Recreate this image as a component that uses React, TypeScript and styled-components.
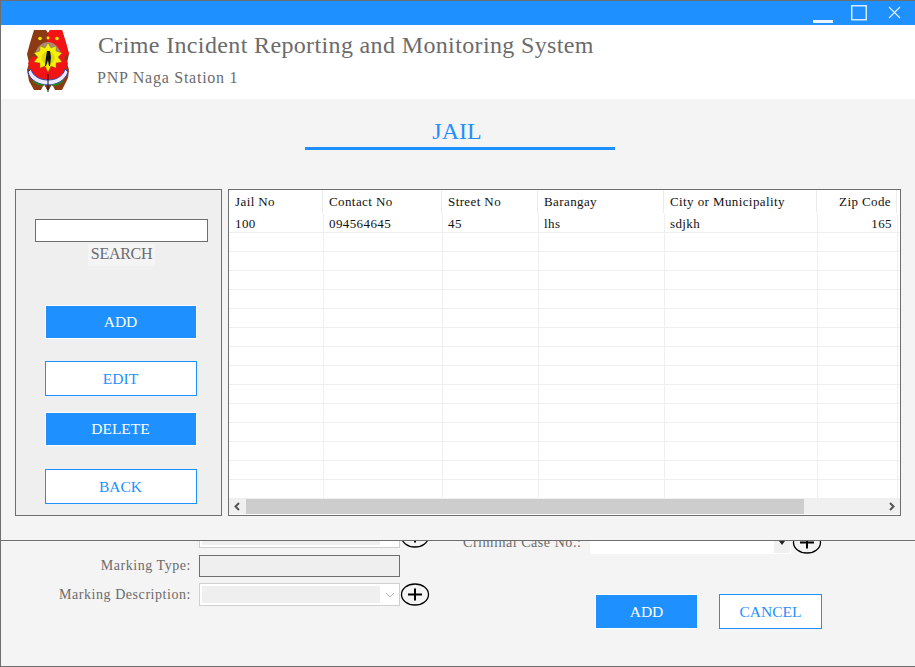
import React from "react";
import styled, { createGlobalStyle } from "styled-components";

const SERIF = `"Liberation Serif", "Times New Roman", serif`;
const BLUE = "#1e90ff";
const GREY_TEXT = "#6b6b6b";
const EDGE = "#6e6e6e";

const GlobalStyle = createGlobalStyle`
    html, body {
        margin: 0;
        padding: 0;
        background: #f4f4f4;
    }
    * {
        box-sizing: border-box;
    }
`;

const Window = styled.div`
    width: 915px;
    height: 667px;
    display: flex;
    flex-direction: column;
    border: 1px solid ${EDGE};
    border-right: 0;
    background: #f4f4f4;
    font-family: ${SERIF};
    overflow: hidden;
`;

const TitleBar = styled.div`
    height: 24px;
    flex: none;
    display: flex;
    justify-content: flex-end;
    align-items: flex-start;
    background: ${BLUE};
    padding: 4px 14px 0 0;
`;

const WindowIcon = styled.svg`
    display: block;
    margin-left: ${(p: { $gap: number }) => p.$gap}px;
`;

const Header = styled.div`
    height: 74px;
    flex: none;
    display: flex;
    background: #fff;
    padding: 5px 0 0 26px;
    gap: 29px;
`;

const HeaderText = styled.div`
    display: flex;
    flex-direction: column;
    color: ${GREY_TEXT};
`;

const AppTitle = styled.div`
    font-size: 24px;
    line-height: 30px;
    letter-spacing: 0.36px;
`;

const AppSubtitle = styled.div`
    font-size: 16px;
    line-height: 20px;
    margin-top: 8px;
    margin-left: -1px;
    letter-spacing: 0.75px;
`;

const MainPanel = styled.div`
    height: 442px;
    flex: none;
    display: flex;
    flex-direction: column;
    align-items: center;
    background: #f4f4f4;
    border-bottom: 1px solid ${EDGE};
    padding-top: 15px;
`;

const PageTitle = styled.div`
    width: 310px;
    height: 36px;
    flex: none;
    border-bottom: 3px solid ${BLUE};
    color: ${BLUE};
    font-size: 24px;
    line-height: 34px;
    text-align: center;
    margin-left: 3px;
    padding-right: 5px;
`;

const Body = styled.div`
    width: 100%;
    display: flex;
    gap: 6px;
    padding: 39px 14px 0 14px;
`;

const SidePanel = styled.div`
    width: 207px;
    height: 327px;
    flex: none;
    display: flex;
    flex-direction: column;
    align-items: center;
    background: #efefef;
    border: 1px solid ${EDGE};
    padding: 29px 0 0 6px;
`;

const SearchInput = styled.input`
    width: 173px;
    height: 23px;
    flex: none;
    background: #fff;
    border: 1px solid ${EDGE};
    border-radius: 0;
    padding: 0;
`;

const SearchLabel = styled.div`
    width: 67px;
    height: 22px;
    flex: none;
    margin-top: 2px;
    background: #f4f4f4;
    color: ${GREY_TEXT};
    font-size: 16px;
    letter-spacing: -0.3px;
    line-height: 20px;
    text-align: center;
`;

const SideButtons = styled.div`
    display: flex;
    flex-direction: column;
    align-items: center;
    margin: 39px 2px 0 0;
`;

const ActionButton = styled.button<{ $solid?: boolean; $w: number; $h: number; $top?: number }>`
    width: ${(p) => p.$w}px;
    height: ${(p) => p.$h}px;
    flex: none;
    margin-top: ${(p) => p.$top ?? 0}px;
    padding: 0;
    border-radius: 0;
    border: 1px solid ${(p) => (p.$solid ? "#fff" : BLUE)};
    background: ${(p) => (p.$solid ? BLUE : "#fff")};
    color: ${(p) => (p.$solid ? "#fff" : BLUE)};
    font-family: ${SERIF};
    font-size: 15.5px;
`;

const TableBox = styled.div`
    width: 673px;
    height: 327px;
    flex: none;
    display: flex;
    flex-direction: column;
    background: #fff;
    border: 1px solid ${EDGE};
`;

const Rows = styled.div`
    flex: 1;
    overflow: hidden;
`;

const HeadRow = styled.div`
    height: 24px;
    display: flex;
`;

const HeadCell = styled.div<{ $w: number; $right?: boolean }>`
    width: ${(p) => p.$w}px;
    height: 23px;
    flex: none;
    border-right: 1px solid #ececec;
    padding: 0 5px 0 6px;
    color: #111;
    font-size: 13px;
    letter-spacing: 0.4px;
    line-height: 23px;
    text-align: ${(p) => (p.$right ? "right" : "left")};
    white-space: nowrap;
`;

const DataRow = styled.div`
    height: 19px;
    display: flex;
    padding-left: 1px;
    border-bottom: 1px solid #efefef;
`;

const DataCell = styled.div<{ $w: number; $right?: boolean }>`
    width: ${(p) => p.$w}px;
    height: 18px;
    flex: none;
    box-sizing: content-box;
    margin-right: 0;
    border-right: 1px solid #efefef;
    padding: 0 5px;
    color: #111;
    font-size: 13px;
    letter-spacing: 0.4px;
    line-height: 20px;
    text-align: ${(p) => (p.$right ? "right" : "left")};
    white-space: nowrap;
    width: ${(p) => p.$w - 11}px;
`;

const ScrollBar = styled.div`
    height: 15px;
    flex: none;
    display: flex;
    align-items: center;
    background: #f0f0f0;
    margin-bottom: 1px;
`;

const ScrollArrow = styled.svg`
    width: 17px;
    height: 15px;
    flex: none;
`;

const ScrollTrack = styled.div`
    flex: 1;
    height: 15px;
`;

const ScrollThumb = styled.div`
    width: 558px;
    height: 15px;
    background: #cdcdcd;
`;

const Lower = styled.div`
    flex: 1;
    min-height: 0;
    display: flex;
    overflow: hidden;
`;

const LowerLeft = styled.div`
    width: 462px;
    flex: none;
    display: flex;
    flex-direction: column;
    justify-content: flex-end;
    gap: 6px;
    padding-bottom: 60px;
`;

const LowerRight = styled.div`
    flex: 1;
    display: flex;
    flex-direction: column;
    justify-content: flex-end;
    padding-bottom: 37px;
`;

const FormRow = styled.div`
    height: 23px;
    flex: none;
    display: flex;
    align-items: center;
`;

const FieldLabel = styled.div<{ $w: number }>`
    width: ${(p) => p.$w}px;
    flex: none;
    color: ${GREY_TEXT};
    font-size: 14px;
    letter-spacing: 0.55px;
    text-align: right;
    white-space: nowrap;
`;

const TextField = styled.div`
    width: 201px;
    height: 22px;
    margin-left: 8px;
    background: #efefef;
    border: 1px solid ${EDGE};
`;

const Combo = styled.div<{ $dark?: boolean; $ml: number }>`
    width: 201px;
    height: 23px;
    flex: none;
    margin-left: ${(p) => p.$ml}px;
    margin-right: ${(p) => (p.$dark ? 1 : 0)}px;
    display: flex;
    align-items: center;
    justify-content: flex-end;
    background: #fff;
    border: 1px solid ${(p) => (p.$dark ? "#fff" : "#cfcfcf")};
    padding: ${(p) => (p.$dark ? "0" : "2px 0 2px 2px")};
`;

const ComboValue = styled.div`
    flex: 1;
    height: 100%;
    background: #efefef;
`;

const ComboBlank = styled.div`
    flex: 1;
    height: 100%;
    background: #fff;
`;

const ComboArrow = styled.div<{ $dark?: boolean }>`
    width: ${(p) => (p.$dark ? 16 : 19)}px;
    height: 100%;
    flex: none;
    display: flex;
    align-items: center;
    justify-content: center;
    background: ${(p) => (p.$dark ? "#f0f0f0" : "#fff")};
`;

const PlusIcon = styled.svg`
    width: 30px;
    height: 23px;
    flex: none;
    display: block;
`;

const FormButtons = styled.div`
    display: flex;
    align-items: center;
    gap: 21px;
    margin-top: 40px;
    padding-left: 132px;
`;

const columns = [
    { name: "Jail No", w: 94 },
    { name: "Contact No", w: 119 },
    { name: "Street No", w: 96 },
    { name: "Barangay", w: 126 },
    { name: "City or Municipality", w: 153 },
    { name: "Zip Code", w: 80, right: true },
];

const firstRow = ["100", "094564645", "45", "lhs", "sdjkh", "165"];
const emptyRows = Array.from({ length: 14 }, () => ["", "", "", "", "", ""]);

const Plus = () => (
    <PlusIcon viewBox="0 0 30 23">
        <ellipse cx="15" cy="11.5" rx="13.5" ry="10.5" fill="none" stroke="#000" strokeWidth="1.3" />
        <path d="M8 11.5h14M15 5.5v12" stroke="#000" strokeWidth="2" />
    </PlusIcon>
);

const Chevron = () => (
    <svg width="10" height="6" viewBox="0 0 10 6">
        <path d="M1 1l4 4 4-4" fill="none" stroke="#b5b5b5" strokeWidth="1" />
    </svg>
);

const SmallArrow = () => (
    <svg width="6" height="4" viewBox="0 0 6 4">
        <path d="M0 0h6L3 4z" fill="#222" />
    </svg>
);

// the PNP seal, simplified
const Logo = () => (
    <svg width="42" height="62" viewBox="0 0 42 62">
        <path d="M7 0h12l2 3 2-3h12l4 13 3 11-2 9 2 7-1 8-6 12h-7l-3-6-3 6h-2l-3-6-3 6H7L2 51l-2-11 2-7-2-9 3-11z" fill="#8c3a12" />
        <path d="M21 3l2-3h12l4 13 3 11-6 4-15-6z" fill="#f21414" />
        <path d="M1 33l5-7 15 6 15-6 5 7-4 13-6 6H11l-6-6z" fill="#f21414" />
        <path d="M8 24c2-8 8-12 13-12s11 4 13 12l-3 3c-2-6-6-9-10-9s-8 3-10 9z" fill="#a98a78" />
        <path d="M21 13l3 5 5-2v5l6 2-4 4 4 5-6 1v5l-5-2-3 6-3-6-5 2v-5l-6-1 4-5-4-4 6-2v-5l5 2z" fill="#f6f00a" stroke="#77750f" strokeWidth="0.4" />
        <circle cx="21" cy="28" r="6.5" fill="#dcd70a" />
        <path d="M20 21h3l1 6-1 9h-1l-1-6-2 6h-1l1-9z" fill="#111" />
        <path d="M4 39c2 8 10 11 17 11s15-3 17-11l3 3c-3 9-12 13-20 13S3 51 1 42z" fill="#e8e8ff" stroke="#3344aa" strokeWidth="1" />
        <circle cx="13" cy="8.5" r="1.8" fill="#f4e70a" />
        <circle cx="30" cy="8.5" r="1.8" fill="#f4e70a" />
        <circle cx="21" cy="8" r="1.4" fill="#f4e70a" />
        <path d="M21 44v18" stroke="#111" strokeWidth="1" />
        <path d="M6 51c3 3 7 4 11 4M36 51c-3 3-7 4-11 4" stroke="#1f8a1f" strokeWidth="1.5" fill="none" />
    </svg>
);

const App: React.FC = () => {
    return (
        <Window>
            <GlobalStyle />
            <TitleBar>
                <WindowIcon $gap={0} width="20" height="18" viewBox="0 0 20 18">
                    <rect x="0" y="15" width="20" height="3" fill="#e9f4ff" />
                </WindowIcon>
                <WindowIcon $gap={18} width="16" height="16" viewBox="0 0 16 16">
                    <rect x="0.75" y="0.75" width="14.5" height="14" fill="none" stroke="#d5eaff" strokeWidth="1.5" />
                </WindowIcon>
                <WindowIcon $gap={21} width="13" height="16" viewBox="0 0 13 16">
                    <path d="M1 2l11 11M12 2L1 13" stroke="#e9f4ff" strokeWidth="1.1" fill="none" />
                </WindowIcon>
            </TitleBar>
            <Header>
                <Logo />
                <HeaderText>
                    <AppTitle>Crime Incident Reporting and Monitoring System</AppTitle>
                    <AppSubtitle>PNP Naga Station 1</AppSubtitle>
                </HeaderText>
            </Header>
            <MainPanel>
                <PageTitle>JAIL</PageTitle>
                <Body>
                    <SidePanel>
                        <SearchInput />
                        <SearchLabel>SEARCH</SearchLabel>
                        <SideButtons>
                            <ActionButton $solid $w={152} $h={34}>ADD</ActionButton>
                            <ActionButton $w={152} $h={35} $top={22}>EDIT</ActionButton>
                            <ActionButton $solid $w={152} $h={34} $top={16}>DELETE</ActionButton>
                            <ActionButton $w={152} $h={35} $top={23}>BACK</ActionButton>
                        </SideButtons>
                    </SidePanel>
                    <TableBox>
                        <Rows>
                            <HeadRow>
                                {columns.map((c) => (
                                    <HeadCell key={c.name} $w={c.w} $right={c.right}>{c.name}</HeadCell>
                                ))}
                            </HeadRow>
                            {[firstRow, ...emptyRows].map((row, i) => (
                                <DataRow key={i}>
                                    {row.map((v, j) => (
                                        <DataCell key={j} $w={columns[j].w} $right={columns[j].right}>{v}</DataCell>
                                    ))}
                                </DataRow>
                            ))}
                        </Rows>
                        <ScrollBar>
                            <ScrollArrow viewBox="0 0 17 15">
                                <path d="M10 4l-3.5 3.5L10 11" fill="none" stroke="#555" strokeWidth="2" />
                            </ScrollArrow>
                            <ScrollTrack>
                                <ScrollThumb />
                            </ScrollTrack>
                            <ScrollArrow viewBox="0 0 17 15">
                                <path d="M7 4l3.5 3.5L7 11" fill="none" stroke="#555" strokeWidth="2" />
                            </ScrollArrow>
                        </ScrollBar>
                    </TableBox>
                </Body>
            </MainPanel>
            <Lower>
                <LowerLeft>
                    <FormRow>
                        <FieldLabel $w={190}>Armor:</FieldLabel>
                        <Combo $ml={8}>
                            <ComboValue />
                            <ComboArrow />
                        </Combo>
                        <Plus />
                    </FormRow>
                    <FormRow>
                        <FieldLabel $w={190}>Marking Type:</FieldLabel>
                        <TextField />
                    </FormRow>
                    <FormRow>
                        <FieldLabel $w={190}>Marking Description:</FieldLabel>
                        <Combo $ml={8}>
                            <ComboValue />
                            <ComboArrow><Chevron /></ComboArrow>
                        </Combo>
                        <Plus />
                    </FormRow>
                </LowerLeft>
                <LowerRight>
                    <FormRow>
                        <FieldLabel $w={116}>Criminal Case No.:</FieldLabel>
                        <Combo $dark $ml={11}>
                            <ComboBlank />
                            <ComboArrow $dark><SmallArrow /></ComboArrow>
                        </Combo>
                        <Plus />
                    </FormRow>
                    <FormButtons>
                        <ActionButton $solid $w={103} $h={35}>ADD</ActionButton>
                        <ActionButton $w={103} $h={35}>CANCEL</ActionButton>
                    </FormButtons>
                </LowerRight>
            </Lower>
        </Window>
    );
};

export default App;
